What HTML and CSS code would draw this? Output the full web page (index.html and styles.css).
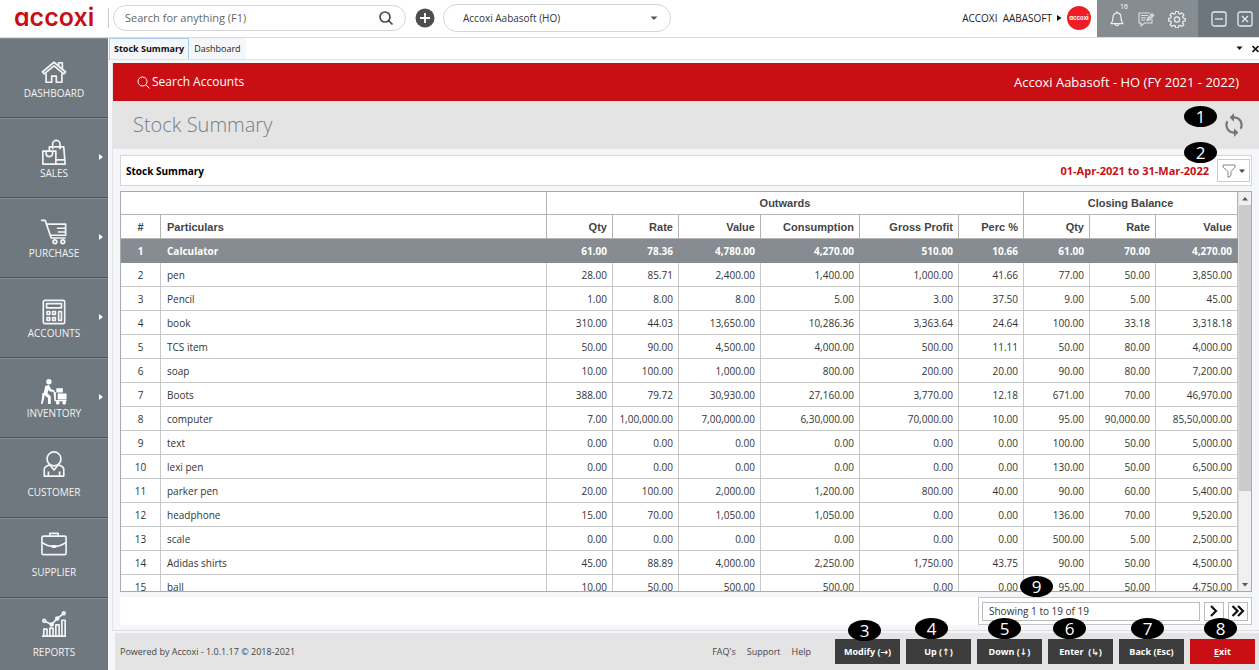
FILE: index.html
```html
<!DOCTYPE html>
<html lang="en">
<head>
<meta charset="utf-8">
<title>Accoxi - Stock Summary</title>
<link rel="stylesheet" href="styles.css">
</head>
<body>
<header class="topbar">
  <a class="logo" href="#">accoxi</a>
  <form class="search">
    <input class="search-input" type="text" aria-label="Search for anything" placeholder="Search for anything (F1)">
    <button class="icon-btn" type="button" aria-label="Search"><svg width="16" height="16" viewBox="0 0 16 16" fill="none" stroke="#4a4a4a" stroke-width="1.7"><circle cx="7" cy="7" r="5"/><path d="M10.6 10.6L14.5 14.5"/></svg></button>
  </form>
  <button class="icon-btn add" type="button" aria-label="Add"><svg width="20" height="20" viewBox="0 0 20 20"><circle cx="10" cy="10" r="9.5" fill="#4d4d4d"/><path d="M10 5v10M5 10h10" stroke="#fff" stroke-width="1.8"/></svg></button>
  <div class="company">
    <select class="company-select" aria-label="Company"><option>Accoxi Aabasoft (HO)</option></select>
    <svg class="caret" width="8" height="5" viewBox="0 0 8 5"><path d="M0.5 0.5h7L4 4z" fill="#555"/></svg>
  </div>
  <div class="user">
    <span class="user-name">ACCOXI&nbsp; AABASOFT</span>
    <svg width="5" height="6" viewBox="0 0 5 6"><path d="M0 0l4.5 3L0 6z" fill="#111"/></svg>
    <span class="avatar">accoxi</span>
  </div>
  <div class="tools">
    <button class="icon-btn bell" type="button" aria-label="Notifications"><svg width="16" height="18" viewBox="0 0 16 18" fill="none" stroke="#eef0f1" stroke-width="1.2" stroke-linejoin="round"><path d="M8 1.2v1.6M2 13.6c1.6-1.6 2-3 2-6C4 4.6 5.6 2.8 8 2.8s4 1.8 4 4.800c0 3 .4 4.400 2 6z"/><path d="M6.200 13.800c0 2.500 3.600 2.500 3.600 0"/></svg><span class="count">16</span></button>
    <button class="icon-btn" type="button" aria-label="Messages"><svg width="17" height="16" viewBox="0 0 17 16" fill="none" stroke="#dfe2e4" stroke-width="1.100"><path d="M12 2H1v10h2v3l3.500-3H14V8"/><path d="M3 4.500h7M3 6.700h5M3 9h4"/><path d="M9 9.500l.6-2.300L14 2.800l1.800 1.600-4.400 4.500z" fill="#b9bdc0"/></svg></button>
    <button class="icon-btn" type="button" aria-label="Settings"><svg width="18" height="18" viewBox="0 0 18 18" fill="none" stroke="#eef0f1" stroke-width="1.200" stroke-linejoin="round"><path d="M7.600 1.500h2.800l.4 2 1.300.6 1.800-1.200 2 2-1.200 1.800.5 1.300 2 .4v2.500l-2 .4-.6 1.400 1.200 1.800-2 2-1.800-1.200-1.300.6-.4 2H7.600l-.4-2-1.300-.6-1.800 1.200-2-2 1.200-1.800-.6-1.400-2-.4V8.400l2-.4.6-1.300-1.200-1.800 2-2 1.800 1.200 1.300-.6z"/><circle cx="9" cy="9.500" r="2.600"/></svg></button>
  </div>
  <div class="window-controls">
    <button class="icon-btn" type="button" aria-label="Minimize"><svg width="16" height="16" viewBox="0 0 16 16" fill="none" stroke="#e8eaeb" stroke-width="1.300"><rect x="1" y="1" width="14" height="14" rx="2"/><path d="M4 8h8"/></svg></button>
    <button class="icon-btn" type="button" aria-label="Close"><svg width="16" height="16" viewBox="0 0 16 16" fill="none" stroke="#e8eaeb" stroke-width="1.300"><rect x="1" y="1" width="14" height="14" rx="2"/><path d="M5 5l6 6M11 5l-6 6"/></svg></button>
  </div>
</header>

<div class="body">
<nav class="sidebar">
  <a class="nav-item" href="#"><svg class="nav-icon" viewBox="0 0 28 28"><path d="M1.500 14L14 3.500 26.500 14l-2 2L14 7.300 3.500 16z"/><path d="M19 7V4h4v6.700M5.500 15.500V25h6v-6.500h5V25h6v-9.500"/></svg>DASHBOARD</a>
  <a class="nav-item has-sub" href="#"><svg class="nav-icon" viewBox="0 0 28 28"><path d="M2 13h14v14H2zM9 13V8.500h15.500L26 27H16M16.500 22.500h9M5.500 13v2.500a3.500 3.500 0 0 0 7 0V13M12.500 11V5.500a4 4 0 0 1 8 0V11"/></svg>SALES</a>
  <a class="nav-item has-sub" href="#"><svg class="nav-icon" viewBox="0 0 28 28"><path d="M0 1.500h4.500L11 20.500h15.500M6 5.500H26.500v12H10.500M17 10h9.500M18 14h8.500"/><circle cx="15" cy="24.500" r="2"/><circle cx="23.500" cy="24.500" r="2"/></svg>PURCHASE</a>
  <a class="nav-item has-sub" href="#"><svg class="nav-icon" viewBox="0 0 28 28"><rect x="2.500" y="1.500" width="23" height="25" rx="1.500"/><path d="M6 5h16v4.500H6zM6.500 13.500h3v3h-3zM12.500 13.500h3v3h-3zM19 13.500h3v9.500h-3zM6.500 20h3v3h-3zM12.500 20h3v3h-3z"/></svg>ACCOUNTS</a>
  <a class="nav-item has-sub" href="#"><svg class="nav-icon filled" viewBox="0 0 28 28"><circle cx="8.500" cy="3" r="2.900"/><path d="M4.500 7.500l4-1 2.500 4.500 3.500 1V14l-5-.5-1.500-2L7 15.500l3.500 3V27H7.500v-6.500l-3.500-3-1 5L1.500 27H0l1-6 .5-6H3z"/><path d="M16.500 10h7v4.500h-7zM18 15.500h9.500v6.500H18zM13.500 14h2.500v8.500h11.500V24H14.500z"/><circle cx="18" cy="25.500" r="2"/><circle cx="25" cy="25.500" r="2"/></svg>INVENTORY</a>
  <a class="nav-item low" href="#"><svg class="nav-icon" viewBox="0 0 28 28"><circle cx="14" cy="8.500" r="7.500"/><path d="M9.500 14.500L5 17q-1.500 1-1.500 3v7h21v-7q0-2-1.500-3l-4.500-2.500M9.500 15l4.500 5.500 4.500-5.500M8 27v-5M20 27v-5"/></svg>CUSTOMER</a>
  <a class="nav-item low" href="#"><svg class="nav-icon" viewBox="0 0 28 28"><rect x="1" y="5.500" width="26" height="20" rx="1.500"/><path d="M9.500 5V2.500h9V5M1.500 12.500c4 3 8 4 12.500 4s8.500-1 12.500-4"/><path d="M12.500 16h3v1.500h-3z"/></svg>SUPPLIER</a>
  <a class="nav-item low" href="#"><svg class="nav-icon" viewBox="0 0 28 28"><path d="M1 27h26M3 26.500v-7h3.500v7M9.500 26.500v-8H13v8M16 26.500V15h3.500v11.500M22.500 26.500V10H26v16.500M4 11l7.500 3.500L17 8.500l7.500-6"/><circle cx="3.500" cy="10.500" r="1.500"/><circle cx="11.500" cy="14.500" r="1.500"/><circle cx="17.500" cy="8" r="1.500"/><circle cx="24.500" cy="2.500" r="1.500"/></svg>REPORTS</a>
</nav>

<div class="workspace">
  <div class="tabs">
    <button class="tab active" type="button">Stock Summary</button>
    <button class="tab" type="button">Dashboard</button>
    <span class="tab-tools">
      <button class="icon-btn" type="button" aria-label="Tab list"><svg width="7" height="5" viewBox="0 0 7 5"><path d="M0.500 0.500h6L3.500 4z" fill="#111"/></svg></button>
      <button class="icon-btn" type="button" aria-label="Close tab"><svg width="7" height="8" viewBox="0 0 7 8"><path d="M0.500 1l6 6M6.500 1l-6 6" stroke="#111" stroke-width="1.600"/></svg></button>
    </span>
  </div>
  <main class="page">
    <div class="banner">
      <a class="banner-search" href="#"><svg width="13" height="13" viewBox="0 0 13 13" fill="none" stroke="#fff" stroke-width="1"><circle cx="5.500" cy="5.500" r="4.500"/><path d="M9 9l3.500 3.500"/></svg>Search Accounts</a>
      <span class="banner-company">Accoxi Aabasoft - HO (FY 2021 - 2022)</span>
    </div>
    <div class="title-row">
      <h1 class="title">Stock Summary</h1>
      <button class="icon-btn" type="button" aria-label="Refresh"><svg width="20" height="26" viewBox="3 0 18 24" fill="#757575"><path d="M12 4V1L8 5l4 4V6c3.310 0 6 2.690 6 6 0 1.010-.25 1.970-.7 2.800l1.460 1.460C19.540 15.030 20 13.570 20 12c0-4.420-3.580-8-8-8zm0 14c-3.310 0-6-2.690-6-6 0-1.010.25-1.970.7-2.800L5.240 7.740C4.460 8.970 4 10.430 4 12c0 4.420 3.580 8 8 8v3l4-4-4-4v3z"/></svg></button>
      <span class="callout c1">1</span>
    </div>
    <section class="content">
      <div class="panel-head">
        <h2 class="panel-title">Stock Summary</h2>
        <span class="period">01-Apr-2021 to 31-Mar-2022</span>
        <button class="filter" type="button" aria-label="Filter"><svg width="24" height="16" viewBox="0 0 24 16"><path d="M1 2h12v2L9 8.500v4L6 14.500v-6L1 4z" fill="#fff" stroke="#888" stroke-width="1"/><path d="M17 6.500h6L20 10z" fill="#444"/></svg></button>
        <span class="callout c2">2</span>
      </div>
      <div class="grid-area">
        <div class="grid">
          <table class="stock">
            <colgroup><col class="w-no"><col><col class="w-s"><col class="w-s"><col class="w-m"><col class="w-l"><col class="w-l"><col class="w-p"><col class="w-s"><col class="w-s"><col class="w-m"></colgroup>
            <thead>
              <tr class="groups"><th colspan="2"></th><th colspan="6" scope="colgroup">Outwards</th><th colspan="3" scope="colgroup">Closing Balance</th></tr>
              <tr><th scope="col">#</th><th scope="col">Particulars</th><th scope="col">Qty</th><th scope="col">Rate</th><th scope="col">Value</th><th scope="col">Consumption</th><th scope="col">Gross Profit</th><th scope="col">Perc %</th><th scope="col">Qty</th><th scope="col">Rate</th><th scope="col">Value</th></tr>
            </thead>
            <tbody>
              <tr class="selected"><td>1</td><td>Calculator</td><td>61.00</td><td>78.36</td><td>4,780.00</td><td>4,270.00</td><td>510.00</td><td>10.66</td><td>61.00</td><td>70.00</td><td>4,270.00</td></tr>
              <tr><td>2</td><td>pen</td><td>28.00</td><td>85.71</td><td>2,400.00</td><td>1,400.00</td><td>1,000.00</td><td>41.66</td><td>77.00</td><td>50.00</td><td>3,850.00</td></tr>
              <tr><td>3</td><td>Pencil</td><td>1.00</td><td>8.00</td><td>8.00</td><td>5.00</td><td>3.00</td><td>37.50</td><td>9.00</td><td>5.00</td><td>45.00</td></tr>
              <tr><td>4</td><td>book</td><td>310.00</td><td>44.03</td><td>13,650.00</td><td>10,286.36</td><td>3,363.64</td><td>24.64</td><td>100.00</td><td>33.18</td><td>3,318.18</td></tr>
              <tr><td>5</td><td>TCS item</td><td>50.00</td><td>90.00</td><td>4,500.00</td><td>4,000.00</td><td>500.00</td><td>11.11</td><td>50.00</td><td>80.00</td><td>4,000.00</td></tr>
              <tr><td>6</td><td>soap</td><td>10.00</td><td>100.00</td><td>1,000.00</td><td>800.00</td><td>200.00</td><td>20.00</td><td>90.00</td><td>80.00</td><td>7,200.00</td></tr>
              <tr><td>7</td><td>Boots</td><td>388.00</td><td>79.72</td><td>30,930.00</td><td>27,160.00</td><td>3,770.00</td><td>12.18</td><td>671.00</td><td>70.00</td><td>46,970.00</td></tr>
              <tr><td>8</td><td>computer</td><td>7.00</td><td>1,00,000.00</td><td>7,00,000.00</td><td>6,30,000.00</td><td>70,000.00</td><td>10.00</td><td>95.00</td><td>90,000.00</td><td>85,50,000.00</td></tr>
              <tr><td>9</td><td>text</td><td>0.00</td><td>0.00</td><td>0.00</td><td>0.00</td><td>0.00</td><td>0.00</td><td>100.00</td><td>50.00</td><td>5,000.00</td></tr>
              <tr><td>10</td><td>lexi pen</td><td>0.00</td><td>0.00</td><td>0.00</td><td>0.00</td><td>0.00</td><td>0.00</td><td>130.00</td><td>50.00</td><td>6,500.00</td></tr>
              <tr><td>11</td><td>parker pen</td><td>20.00</td><td>100.00</td><td>2,000.00</td><td>1,200.00</td><td>800.00</td><td>40.00</td><td>90.00</td><td>60.00</td><td>5,400.00</td></tr>
              <tr><td>12</td><td>headphone</td><td>15.00</td><td>70.00</td><td>1,050.00</td><td>1,050.00</td><td>0.00</td><td>0.00</td><td>136.00</td><td>70.00</td><td>9,520.00</td></tr>
              <tr><td>13</td><td>scale</td><td>0.00</td><td>0.00</td><td>0.00</td><td>0.00</td><td>0.00</td><td>0.00</td><td>500.00</td><td>5.00</td><td>2,500.00</td></tr>
              <tr><td>14</td><td>Adidas shirts</td><td>45.00</td><td>88.89</td><td>4,000.00</td><td>2,250.00</td><td>1,750.00</td><td>43.75</td><td>90.00</td><td>50.00</td><td>4,500.00</td></tr>
              <tr><td>15</td><td>ball</td><td>10.00</td><td>50.00</td><td>500.00</td><td>500.00</td><td>0.00</td><td>0.00</td><td>95.00</td><td>50.00</td><td>4,750.00</td></tr>
            </tbody>
          </table>
        </div>
        <div class="scrollbar">
          <svg width="12" height="13" viewBox="0 0 12 13"><path d="M3 8.500h6L6 5z" fill="#555"/></svg>
          <div class="thumb"></div>
          <svg width="12" height="13" viewBox="0 0 12 13"><path d="M3 5h6L6 8.500z" fill="#555"/></svg>
        </div>
      </div>
      <div class="pager-row">
        <div class="pager">
          <input class="pager-info" type="text" readonly aria-label="Records shown" value="Showing 1 to 19 of 19">
          <button class="page-btn" type="button" aria-label="Next page"><svg width="10" height="12" viewBox="0 0 10 12" fill="none" stroke="#111" stroke-width="2.200"><path d="M2 1l5 5-5 5"/></svg></button>
          <button class="page-btn" type="button" aria-label="Last page"><svg width="14" height="12" viewBox="0 0 14 12" fill="none" stroke="#111" stroke-width="2.200"><path d="M1.500 1l5 5-5 5M7 1l5 5-5 5"/></svg></button>
          <span class="callout c9">9</span>
        </div>
      </div>
    </section>
  </main>
  <footer class="footer">
    <span class="powered">Powered by Accoxi - 1.0.1.17 © 2018-2021</span>
    <span class="links"><a href="#">FAQ's</a><a href="#">Support</a><a href="#">Help</a></span>
    <div class="actions">
      <span class="action"><button class="btn" type="button">Modify (→)</button><span class="callout c3">3</span></span>
      <span class="action"><button class="btn" type="button">Up (↑)</button><span class="callout c4">4</span></span>
      <span class="action"><button class="btn" type="button">Down (↓)</button><span class="callout c5">5</span></span>
      <span class="action"><button class="btn" type="button">Enter&nbsp; (↳)</button><span class="callout c6">6</span></span>
      <span class="action"><button class="btn" type="button">Back (Esc)</button><span class="callout c7">7</span></span>
      <span class="action"><button class="btn exit" type="button"><u>E</u>xit</button><span class="callout c8">8</span></span>
    </div>
  </footer>
</div>
</div>
</body>
</html>
```

FILE: styles.css
```css
* { box-sizing: border-box; }
body {
  margin: 0;
  height: 100vh;
  display: flex;
  flex-direction: column;
  overflow: hidden;
  background: #f4f6f9;
  color: #333;
  font: 10px/14px "Open Sans", "Noto Sans", "DejaVu Sans", sans-serif;
}
a { color: inherit; text-decoration: none; }
button, input, select { font: inherit; color: inherit; }
svg { display: block; flex: none; }
.icon-btn { border: 0; background: none; padding: 0; display: flex; position: relative; }

/* top bar */
.topbar { display: flex; align-items: center; flex: none; height: 38px; padding-bottom: 1px; background: #fff; border-bottom: 1px solid #dcdcdc; }
.logo {
  width: 109px; height: 20px; padding-left: 14px; margin-right: 4px; flex: none;
  border-right: 1px solid #ccc;
  color: #c90e14;
  font: 600 25px/18px Inter, Roboto, sans-serif;
  font-feature-settings: "cv11";
}
.search { display: flex; align-items: center; width: 293px; height: 26px; padding: 0 11px; border: 1px solid #d6d6d6; border-radius: 13px; }
.search-input { flex: 1; min-width: 0; border: 0; outline: 0; padding: 0; background: none; font-size: 11px; }
.search-input::placeholder { color: #666; opacity: 1; }
.add { margin: 0 8px 0 9px; }
.company { display: flex; align-items: center; position: relative; width: 228px; }
.company-select { appearance: none; width: 100%; height: 28px; padding: 0 19px; border: 1px solid #d6d6d6; border-radius: 14px; background: #fff; }
.caret { position: absolute; right: 13px; top: 12px; pointer-events: none; }
.user { display: flex; align-items: center; gap: 5px; margin-left: auto; }
.user-name { color: #222; }
.avatar { display: grid; place-items: center; width: 24px; height: 24px; margin-right: 6px; border-radius: 50%; background: #ee1c25; color: #fff; font: 700 6px/8px Inter, sans-serif; font-feature-settings: "cv11"; }
.tools, .window-controls { display: flex; align-items: center; height: 37px; align-self: flex-start; }
.tools { gap: 13px; width: 101px; padding-left: 12px; background: #868d92; }
.window-controls { gap: 10px; width: 61px; padding-left: 13px; background: #6d767d; }
.count { position: absolute; left: 11px; top: -7px; color: #fff; font-size: 7px; line-height: 8px; }

/* layout */
.body { display: flex; flex: 1; min-height: 0; }
.sidebar { display: flex; flex-direction: column; flex: none; width: 108px; overflow: hidden; background: #6f787f; }
.nav-item {
  display: flex; flex-direction: column; align-items: center; position: relative;
  flex: none; height: 80px; padding-top: 20px; gap: 1px;
  border-top: 1px solid #858c92; border-bottom: 1px solid #4d5459;
  color: #f2f3f4;
}
.nav-item.low { padding-top: 12px; gap: 8px; }
.nav-icon { width: 26px; height: 26px; fill: none; stroke: #f4f5f6; stroke-width: 1.8; stroke-linejoin: round; }
.nav-icon.filled { fill: #fff; stroke: none; }
.has-sub::after { content: ""; position: absolute; right: 5px; top: 35px; border: 3px solid transparent; border-left: 4px solid #fff; border-right: 0; }
.workspace { display: flex; flex-direction: column; flex: 1; min-width: 0; }

/* tabs */
.tabs { display: flex; flex: none; height: 22px; background: #fff; border-bottom: 1px solid #dfe2e5; }
.tab { height: 21px; padding: 0 5px; border: 0; background: #f4f6f9; color: #222; font-size: 9px; }
.tab.active { border: 1px solid #a9cdf0; border-bottom: 0; padding: 0 4px; margin-left: 1px; font-weight: 700; color: #111; }
.tab-tools { display: flex; align-items: center; gap: 9px; margin-left: auto; }

/* page */
.page { display: flex; flex-direction: column; flex: 1; min-height: 0; margin: 3px 0 0 4px; border-bottom: 1px solid #dcdfe2; border-left: 1px solid #e2e4e6; }
.banner { display: flex; align-items: center; justify-content: space-between; flex: none; height: 38px; padding: 0 20px 0 24px; background: #c90e14; color: #fff; font-size: 12px; line-height: 18px; }
.banner-company { font-size: 13px; }
.banner-search { display: flex; align-items: center; gap: 2px; }
.title-row { display: flex; align-items: center; justify-content: space-between; flex: none; position: relative; height: 48px; padding: 0 15px 0 20px; background: #e4e4e4; }
.title { margin: 0; font-size: 20px; line-height: 28px; font-weight: 300; color: #777c80; }
.content { display: flex; flex-direction: column; flex: 1; min-height: 0; padding: 6px 7px 5px 7px; gap: 5px; }
.panel-head { display: flex; align-items: center; flex: none; position: relative; height: 31px; padding: 0 1px 0 5px; background: #fff; border: 1px solid #d4d6d8; }
.panel-title { margin: 0; font-size: 10px; line-height: 14px; font-weight: 700; color: #000; }
.period { margin: 0 8px 0 auto; font-size: 11px; font-weight: 700; color: #c90e14; }
.filter { display: grid; place-items: center; width: 33px; height: 23px; padding: 0; border: 1px solid #ccc; background: #fff; }

/* table */
.grid-area { display: flex; flex: 1; min-height: 0; border: 1px solid #aaa; background: #fff; }
.grid { flex: 1; min-width: 0; overflow: hidden; }
.stock { width: 100%; table-layout: fixed; border-collapse: separate; border-spacing: 0; }
.w-no { width: 40px; }
.w-s { width: 66px; }
.w-m { width: 82px; }
.w-l { width: 99px; }
.w-p { width: 65px; }
.stock th, .stock td { height: 24px; padding: 0 5px; border-right: 1px solid #c8c8c8; border-bottom: 1px solid #c8c8c8; text-align: right; white-space: nowrap; }
.stock th { font: 700 11px/16px "Liberation Sans", Arial, sans-serif; color: #444; border-color: #b4b4b4; }
.stock .groups th { height: 23px; text-align: center; }
.stock tr:not(.groups) > :first-child { text-align: center; }
.stock tr:not(.groups) > :nth-child(2) { text-align: left; padding-left: 6px; }
.stock .selected td { background: #868c91; border-color: #868c91; color: #fff; font-weight: 700; }
.scrollbar { display: flex; flex-direction: column; flex: none; width: 13px; background: #f0f0f0; border-left: 1px solid #ddd; }
.thumb { flex: 0 1 286px; margin-bottom: auto; background: #cbcbcb; }

/* pager */
.pager-row { display: flex; justify-content: flex-end; flex: none; height: 28px; background: #fff; }
.pager { display: flex; align-items: center; position: relative; gap: 4px; width: 274px; padding: 0 3px; border: 1px solid #c4c6c8; }
.pager-info { flex: 1; min-width: 0; height: 19px; padding: 0 6px; border: 1px solid #bbb; background: #fff; outline: 0; }
.page-btn { display: grid; place-items: center; width: 20px; height: 19px; padding: 0; border: 1px solid #bbb; background: #fff; }

/* footer */
.footer { display: flex; align-items: center; flex: none; height: 37px; margin: 2px 0 0 7px; padding: 0 4px 0 5px; background: #e4e4e4; font-size: 9px; color: #444; }
.links { display: flex; gap: 11px; margin: 0 24px 0 auto; }
.actions { display: flex; gap: 6px; }
.action { position: relative; display: flex; }
.btn { width: 65px; height: 25px; padding: 0; border: 0; background: #3d3d3d; color: #fff; font-size: 9px; font-weight: 700; white-space: nowrap; }
.btn.exit { background: #c90e14; }

/* numbered markers laid over the screen */
.callout { position: absolute; z-index: 2; display: grid; place-items: center; width: 33px; height: 21px; border-radius: 50%; background: #000; color: #fff; font-size: 17px; line-height: 20px; font-weight: 400; }
.c1 { right: 42px; top: 5px; }
.c2 { right: 34px; top: -14px; }
.c3 { left: 13px; top: -19px; }
.c4 { left: 9px; top: -21px; }
.c5 { left: 11px; top: -21px; }
.c6 { left: 5px; top: -21px; }
.c7 { left: 12px; top: -21px; }
.c8 { left: 14px; top: -21px; }
.c9 { left: 41px; top: -22px; }
```
